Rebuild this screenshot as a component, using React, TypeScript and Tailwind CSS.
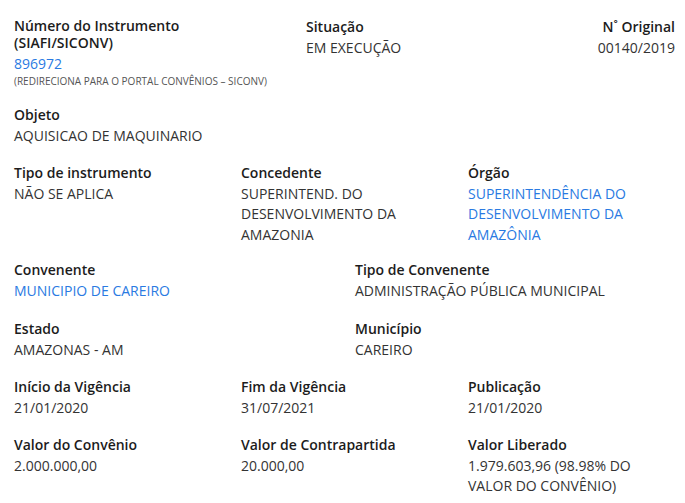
import React from 'react'

type Campo = { label: string; value: React.ReactNode; link?: boolean }

function Item({ label, value, link }: Campo) {
  return (
    <div>
      <p className="text-[14px] font-semibold leading-[19px] text-[#1c1c1c]">{label}</p>
      <p className={`mt-[2px] text-[14px] leading-[20.5px] ${link ? 'text-[#2a7ae2]' : 'text-[#333333]'}`}>{value}</p>
    </div>
  )
}

const tres: Campo[] = [
  { label: 'Tipo de instrumento', value: 'NÃO SE APLICA' },
  { label: 'Concedente', value: 'SUPERINTEND. DO DESENVOLVIMENTO DA AMAZONIA' },
  { label: 'Órgão', value: 'SUPERINTENDÊNCIA DO DESENVOLVIMENTO DA AMAZÔNIA', link: true },
]

export default function App() {
  return (
    <div
      className="w-[685px] h-[503px] bg-white pl-[14px] pr-[10px] pt-[17px] overflow-hidden"
      style={{ fontFamily: '"Open Sans", "Liberation Sans", sans-serif' }}
    >
      {/* topo */}
      <div className="grid grid-cols-[292px_1fr_auto]">
        <div>
          <p className="text-[14px] font-semibold leading-[17px] text-[#1c1c1c]">Número do Instrumento</p>
          <p className="text-[14px] font-semibold leading-[17px] text-[#1c1c1c]">(SIAFI/SICONV)</p>
          <p className="mt-[3px] text-[14px] leading-[20px] text-[#2a7ae2]">896972</p>
          <p className="mt-[1px] text-[10px] leading-[13px] text-[#555555]">(REDIRECIONA PARA O PORTAL CONVÊNIOS – SICONV)</p>
        </div>
        <Item label="Situação" value="EM EXECUÇÃO" />
        <div className="text-right">
          <Item label="N˚ Original" value="00140/2019" />
        </div>
      </div>

      <div className="mt-[17px]">
        <Item label="Objeto" value="AQUISICAO DE MAQUINARIO" />
      </div>

      <div className="mt-[16px] grid grid-cols-[227px_227px_1fr]">
        {tres.map((c) => (
          <div key={c.label} className="pr-[45px]">
            <Item {...c} />
          </div>
        ))}
      </div>

      <div className="mt-[15px] grid grid-cols-[341px_1fr]">
        <Item label="Convenente" value="MUNICIPIO DE CAREIRO" link />
        <Item label="Tipo de Convenente" value="ADMINISTRAÇÃO PÚBLICA MUNICIPAL" />
      </div>

      <div className="mt-[17px] grid grid-cols-[341px_1fr]">
        <Item label="Estado" value="AMAZONAS - AM" />
        <Item label="Município" value="CAREIRO" />
      </div>

      <div className="mt-[17px] grid grid-cols-[227px_227px_1fr]">
        <Item label="Início da Vigência" value="21/01/2020" />
        <Item label="Fim da Vigência" value="31/07/2021" />
        <Item label="Publicação" value="21/01/2020" />
      </div>

      <div className="mt-[16px] grid grid-cols-[227px_227px_1fr]">
        <Item label="Valor do Convênio" value="2.000.000,00" />
        <Item label="Valor de Contrapartida" value="20.000,00" />
        <div className="pr-[40px]">
          <Item label="Valor Liberado" value="1.979.603,96 (98.98% DO VALOR DO CONVÊNIO)" />
        </div>
      </div>
    </div>
  )
}
